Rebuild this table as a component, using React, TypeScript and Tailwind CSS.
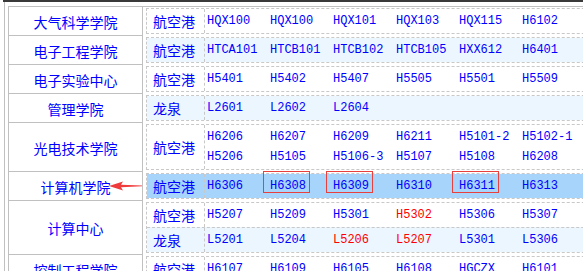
type Room = { n: string; red?: boolean; box?: boolean };
type Sub = { campus: string; lines: Room[][] };
type Row = { name: string; subs: Sub[]; arrow?: boolean };

// "!" = red text, "#" = boxed room
const parse = (s: string): Room[] =>
  s.split(' ').map((t) =>
    t.startsWith('!') ? { n: t.slice(1), red: true } : t.startsWith('#') ? { n: t.slice(1), box: true } : { n: t }
  );

const rows: Row[] = [
  { name: '大气科学学院', subs: [{ campus: '航空港', lines: [parse('HQX100 HQX100 HQX101 HQX103 HQX115 H6102')] }] },
  { name: '电子工程学院', subs: [{ campus: '航空港', lines: [parse('HTCA101 HTCB101 HTCB102 HTCB105 HXX612 H6401')] }] },
  { name: '电子实验中心', subs: [{ campus: '航空港', lines: [parse('H5401 H5402 H5407 H5505 H5501 H5509')] }] },
  { name: '管理学院', subs: [{ campus: '龙泉', lines: [parse('L2601 L2602 L2604')] }] },
  {
    name: '光电技术学院',
    subs: [
      {
        campus: '航空港',
        lines: [parse('H6206 H6207 H6209 H6211 H5101-2 H5102-1'), parse('H5206 H5105 H5106-3 H5107 H5108 H6208')],
      },
    ],
  },
  { name: '计算机学院', arrow: true, subs: [{ campus: '航空港', lines: [parse('H6306 #H6308 #H6309 H6310 #H6311 H6313')] }] },
  {
    name: '计算中心',
    subs: [
      { campus: '航空港', lines: [parse('H5207 H5209 H5301 !H5302 H5306 H5307')] },
      { campus: '龙泉', lines: [parse('L5201 L5204 !L5206 !L5207 L5301 L5306')] },
    ],
  },
  { name: '控制工程学院', subs: [{ campus: '航空港', lines: [parse('H6107 H6109 H6105 H6108 HGCZX H6101')] }] },
];

function Arrow() {
  return (
    <svg className="absolute left-[calc(100%-2px)] top-[2px]" width="33" height="10" viewBox="0 0 33 10">
      <polygon points="0,5 14,0.6 12,3.7 33,4.5 33,5.3 12,6.3 14,9.4" fill="#ef3b3b" />
    </svg>
  );
}

function RoomCell({ r }: { r: Room }) {
  return (
    <div className={`w-[63px] shrink-0 pl-[2px] relative ${r.red ? 'text-[#ff0000]' : 'text-[#0000ff]'}`}>
      {r.n}
      {r.box && <span className="absolute left-[-5px] w-[47px] top-[-9px] h-[22px] border border-[#e8403c]" />}
    </div>
  );
}

export default function App() {
  let k = 0;
  return (
    <div className="w-[583px] h-[271px] overflow-hidden bg-white">
      <div className="ml-[3px] border-t-2 border-[#3a3a3a]">
        <div className="ml-[1px] border-l border-[#c0c0c0] pl-[3px] pt-[4px] h-[300px]">
          <div className="w-[700px] border-t border-l border-[#c0c0c0] font-['Noto_Sans_CJK_SC','Noto_Sans',sans-serif] text-[14px] leading-none text-[#0000ff]">
            {rows.map((row) => (
              <div key={row.name} className="flex">
                <div className="w-[134px] shrink-0 border-r border-b border-[#c0c0c0] flex items-center justify-center">
                  <span className="relative pt-[1px]">
                    {row.name}
                    {row.arrow && <Arrow />}
                  </span>
                </div>
                <div className="flex-1 px-[3px] pt-[1px] pb-[2px]">
                  <div className="border border-dashed border-[#c8c8c8]">
                    {row.subs.map((sub, si) => {
                      const i = k++;
                      const bg = row.arrow ? 'bg-[#a6d4fa]' : i % 2 === 1 ? 'bg-[#ecf6fe]' : 'bg-white';
                      const multi = sub.lines.length > 1;
                      return (
                        <div key={si} className={`flex ${bg} ${si > 0 ? 'border-t border-dashed border-[#c8c8c8]' : ''}`}>
                          <div className="w-[58px] shrink-0 border-r border-dashed border-[#c8c8c8] pl-[6px] flex items-center">
                            {sub.campus}
                          </div>
                          <div className={`flex-1 font-['Liberation_Mono',monospace] text-[12px] ${multi ? 'py-[2px]' : ''}`}>
                            {sub.lines.map((line, li) => (
                              <div key={li} className={`flex items-center ${multi ? 'h-[20px]' : 'h-[24px]'}`}>
                                {line.map((r, ri) => (
                                  <RoomCell key={ri} r={r} />
                                ))}
                              </div>
                            ))}
                          </div>
                        </div>
                      );
                    })}
                  </div>
                </div>
              </div>
            ))}
          </div>
        </div>
      </div>
    </div>
  );
}
